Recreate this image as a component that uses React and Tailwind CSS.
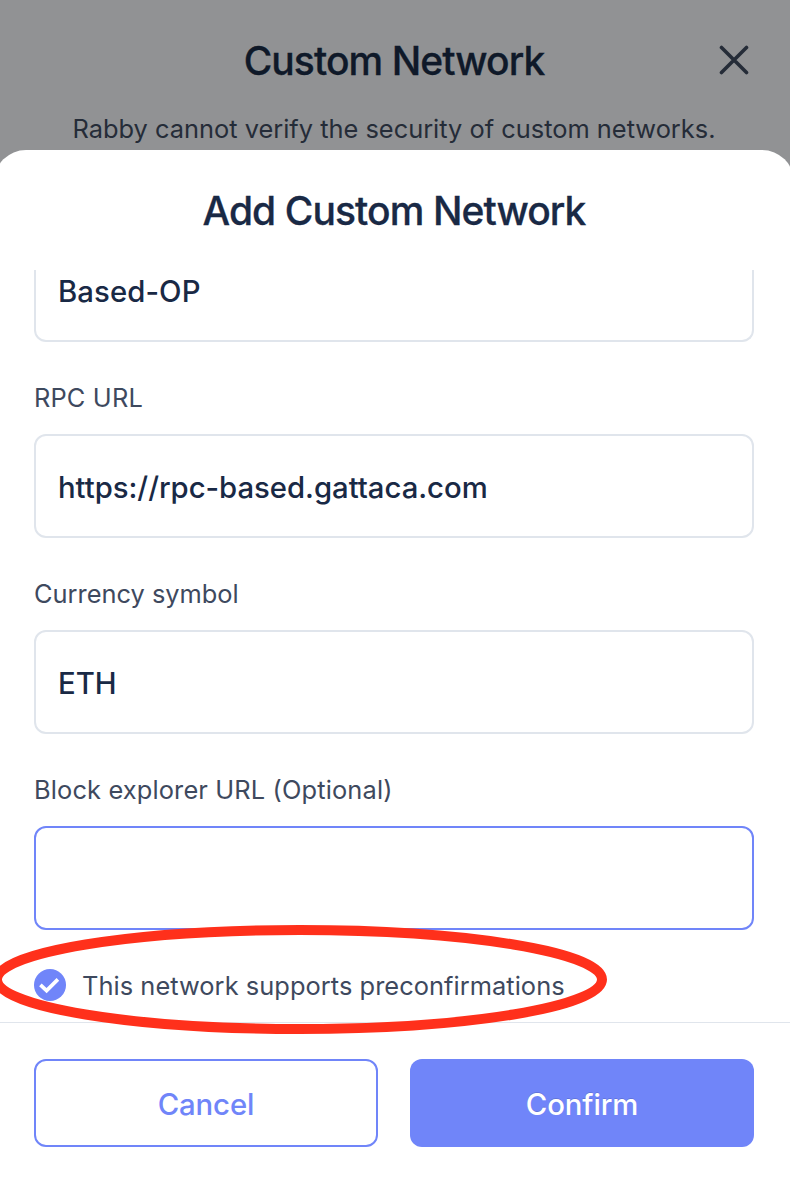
import React from "react";

function Field({ label, value, focused, labelClass, valueClass }) {
  return (
    <div className="flex shrink-0 flex-col">
      <label className="flex h-[92px] items-center pt-5 text-[25.4px] leading-8 text-[#3e495e]">
        <span className={labelClass}>{label}</span>
      </label>
      <div
        className={
          "flex h-[104px] items-center rounded-xl border-2 px-[22px] pt-1 text-[29.3px] font-medium text-[#192945] " +
          (focused ? "border-[#7085f9]" : "border-[#e0e5ec]")
        }
      >
        <span className={valueClass}>{value}</span>
      </div>
    </div>
  );
}

function CheckBadge() {
  return (
    <svg className="size-8 shrink-0" viewBox="0 0 32 32" fill="none">
      <circle cx="16" cy="16" r="16" fill="#7085f9" />
      <path d="M6.4 15.8l6.2 5.8L23.9 10.4" stroke="#fff" strokeWidth="3.7" />
    </svg>
  );
}

export default function App() {
  return (
    <div
      className="relative flex h-[1186px] w-[790px] flex-col overflow-hidden bg-[#919294]"
      style={{ fontFamily: 'Inter, "Liberation Sans", sans-serif' }}
    >
      <header className="flex h-[150px] shrink-0 flex-col pr-[2px]">
        <div className="grid h-[106px] grid-cols-[1fr_auto_1fr] items-center pt-[16px]">
          <span />
          <h1 className="text-[39px] font-medium leading-[48px] tracking-[-0.92px] text-[#0f1929] [-webkit-text-stroke:0.3px_#0f1929]">
            Custom Network
          </h1>
          <svg className="mb-0.5 mr-[39px] size-[30px] justify-self-end" viewBox="0 0 30 30" fill="none">
            <path d="M2.5 2.5l25 25M27.5 2.5l-25 25" stroke="#252c38" strokeWidth="3.6" strokeLinecap="round" />
          </svg>
        </div>
        <p className="whitespace-nowrap pt-[7px] text-center text-[25.4px] leading-8 text-[#252c38]">
          Rabby cannot verify the security of custom networks.
        </p>
      </header>

      <main className="-ml-[6px] flex h-[1036px] w-[800px] shrink-0 flex-col rounded-t-[32px] bg-white">
        <h2 className="flex h-[120px] shrink-0 items-center justify-center pt-0.5 text-[39px] font-medium leading-[48px] tracking-[-0.92px] text-[#192945] [-webkit-text-stroke:0.3px_#192945]">
          Add Custom Network
        </h2>
        <div className="flex h-[752px] flex-col overflow-hidden px-10">
          <div className="flex h-[72px] shrink-0 items-start rounded-b-xl border-2 border-t-0 border-[#e0e5ec] px-[22px] pt-0.5 text-[29.3px] font-medium leading-10 text-[#192945]">
            <span className="tracking-[0.1px]">Based-OP</span>
          </div>
          <Field label="RPC URL" value="https://rpc-based.gattaca.com" labelClass="tracking-[0.15px]" valueClass="tracking-[-0.03px]" />
          <Field label="Currency symbol" value="ETH" />
          <Field label="Block explorer URL (Optional)" value="" focused labelClass="tracking-[0.14px]" />
          <div className="flex h-[71px] items-end gap-4 text-[25.4px] leading-8 text-[#3e495e]">
            <CheckBadge />
            <span className="-mb-px whitespace-nowrap tracking-[0.05px]">This network supports preconfirmations</span>
          </div>
        </div>
        <footer className="grid h-[164px] shrink-0 grid-cols-2 items-start gap-8 border-t border-[#e0e5ec] px-10 pt-9 text-[29.3px] font-medium tracking-[-0.1px]">
          <button className="flex h-[88px] items-center justify-center rounded-xl border-2 border-[#7085f9] pt-1 text-[#7085f9]">
            <span>Cancel</span>
          </button>
          <button className="flex h-[88px] items-center justify-center rounded-xl bg-[#7085f9] pt-1 text-white [text-shadow:0_-1px_0_rgba(0,0,0,0.12)]">
            <span>Confirm</span>
          </button>
        </footer>
      </main>

      <svg
        className="pointer-events-none absolute -left-[10px] top-[920px] h-[120px] w-[620px]"
        viewBox="-10 920 620 120"
        fill="none"
      >
        <ellipse cx="299.5" cy="979.5" rx="302.5" ry="49.5" stroke="#ff301b" strokeWidth="10" />
      </svg>
    </div>
  );
}
